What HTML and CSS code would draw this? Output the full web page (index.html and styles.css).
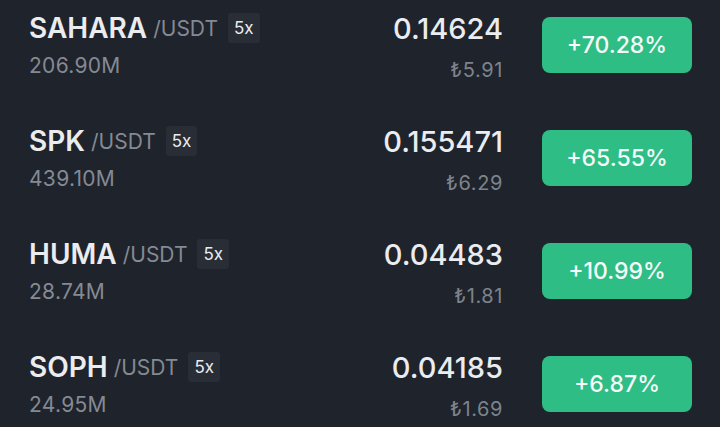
FILE: index.html
```html
<!DOCTYPE html>
<html>
<head>
<meta charset="utf-8">
<link rel="stylesheet" href="styles.css">
</head>
<body>
<div class="list">
  <div class="row">
    <div class="pair">
      <div class="name"><span class="base">SAHARA</span><span class="quote">/USDT</span><span class="lev">5x</span></div>
      <div class="vol">206.90M</div>
    </div>
    <div class="price">
      <div class="last">0.14624</div>
      <div class="fiat">₺5.91</div>
    </div>
    <div class="chg">+70.28%</div>
  </div>
  <div class="row">
    <div class="pair">
      <div class="name"><span class="base">SPK</span><span class="quote">/USDT</span><span class="lev">5x</span></div>
      <div class="vol">439.10M</div>
    </div>
    <div class="price">
      <div class="last">0.155471</div>
      <div class="fiat">₺6.29</div>
    </div>
    <div class="chg">+65.55%</div>
  </div>
  <div class="row">
    <div class="pair">
      <div class="name"><span class="base">HUMA</span><span class="quote">/USDT</span><span class="lev">5x</span></div>
      <div class="vol">28.74M</div>
    </div>
    <div class="price">
      <div class="last">0.04483</div>
      <div class="fiat">₺1.81</div>
    </div>
    <div class="chg">+10.99%</div>
  </div>
  <div class="row">
    <div class="pair">
      <div class="name"><span class="base">SOPH</span><span class="quote">/USDT</span><span class="lev">5x</span></div>
      <div class="vol">24.95M</div>
    </div>
    <div class="price">
      <div class="last">0.04185</div>
      <div class="fiat">₺1.69</div>
    </div>
    <div class="chg">+6.87%</div>
  </div>
</div>
</body>
</html>
```
FILE: styles.css
```css
html, body {
  margin: 0;
  padding: 0;
  background: #1f232b;
  width: 720px;
  height: 427px;
  overflow: hidden;
}
body {
  font-family: "Inter", "Noto Sans", sans-serif;
  color: #eaecef;
}
.list {
  display: flex;
  flex-direction: column;
  padding-top: 8px;
}
.row {
  display: flex;
  align-items: flex-start;
  height: 113px;
  padding: 0 28px 0 29px;
}
.row:last-child {
  height: auto;
}
.pair {
  flex: 1;
  display: flex;
  flex-direction: column;
}
.name {
  display: flex;
  align-items: center;
  height: 40px;
}
.base {
  font-size: 28px;
  font-weight: 600;
}
.quote {
  font-size: 21px;
  color: #848a94;
  margin-left: 6px;
}
.lev {
  margin-left: 10px;
  background: #282d36;
  border-radius: 3px;
  font-size: 17px;
  padding: 4px 6px;
  line-height: 22px;
}
.vol {
  font-size: 21px;
  line-height: 26px;
  color: #848a94;
  letter-spacing: 0.3px;
  margin-top: 5px;
}
.price {
  display: flex;
  flex-direction: column;
  align-items: flex-end;
  margin-right: 39px;
  padding-top: 3px;
}
.last {
  font-size: 29px;
  font-weight: 500;
  line-height: 36px;
}
.fiat {
  font-size: 20px;
  line-height: 26px;
  letter-spacing: 0.6px;
  color: #7d838c;
  margin-top: 10px;
}
.chg {
  width: 150px;
  height: 56px;
  margin-top: 9px;
  background: #2ebd85;
  border-radius: 8px;
  display: flex;
  align-items: center;
  justify-content: center;
  font-size: 23px;
  font-weight: 500;
  color: #f4fbf8;
}
```
